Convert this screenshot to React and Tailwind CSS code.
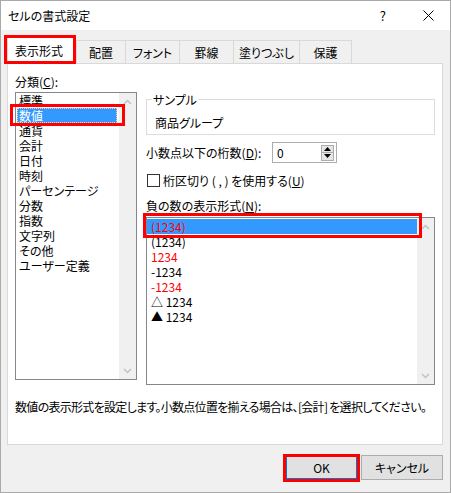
import React from "react";

const categories = [
  "標準",
  "数値",
  "通貨",
  "会計",
  "日付",
  "時刻",
  "パーセンテージ",
  "分数",
  "指数",
  "文字列",
  "その他",
  "ユーザー定義",
];

const negatives = [
  { text: "(1234)", red: true, selected: true },
  { text: "(1234)" },
  { text: "1234", red: true },
  { text: "-1234" },
  { text: "-1234", red: true },
  { text: "△ 1234" },
  { text: "▲ 1234" },
];

const tabs = [
  { label: "配置", w: "w-[49px]" },
  { label: "フォント", w: "w-[54px]" },
  { label: "罫線", w: "w-[54px]" },
  { label: "塗りつぶし", w: "w-[66px]" },
  { label: "保護", w: "w-[53px] border-r" },
];

function Chevron({ up }) {
  return (
    <svg width="9" height="6" viewBox="0 0 9 6">
      <path
        d={up ? "M1 5 L4.5 1.5 L8 5" : "M1 1 L4.5 4.5 L8 1"}
        fill="none"
        stroke="#c2c2c2"
        strokeWidth="1.5"
      />
    </svg>
  );
}

// Windows style vertical scrollbar (track only, no thumb)
function ScrollBar() {
  return (
    <div className="w-[17px] shrink-0 bg-[#f0f0f0] flex flex-col justify-between">
      <div className="h-[17px] flex items-center justify-center">
        <Chevron up />
      </div>
      <div className="h-[17px] flex items-center justify-center">
        <Chevron />
      </div>
    </div>
  );
}

function RedBox({ className }) {
  return (
    <span
      className={`absolute z-20 border-[3px] border-[#ff0000] pointer-events-none ${className}`}
    />
  );
}

export default function App() {
  return (
    <div className="w-[451px] h-[493px] bg-[#f0f0f0] border border-[#aaaaaa] flex flex-col text-[12px] text-black font-['Noto_Sans_CJK_JP',sans-serif] [font-feature-settings:'palt'] leading-[15px]">
      {/* Title bar */}
      <div className="h-[29px] shrink-0 bg-white flex items-center pl-[7px]">
        <span className="flex-1">セルの書式設定</span>
        <span className="text-[13px]">?</span>
        <svg className="ml-[37px] mr-[16px]" width="11" height="11" viewBox="0 0 11 11">
          <path d="M0.5 0.5 L10.5 10.5 M10.5 0.5 L0.5 10.5" stroke="#000" strokeWidth="1" />
        </svg>
      </div>

      {/* Tabs */}
      <div className="h-[33px] shrink-0 flex items-end pl-[6px]">
        <div className="relative z-10 w-[69px] h-[28px] -mb-[1px] bg-white border-x border-t border-[#d9d9d9] pl-[7px] pt-[6px]">
          表示形式
          <RedBox className="-left-[4px] -right-[1px] -top-[2px] bottom-[0px]" />
        </div>
        {tabs.map((t) => (
          <div
            key={t.label}
            className={`${t.w} h-[23px] border-l border-t border-[#d9d9d9] flex items-center justify-center`}
          >
            {t.label}
          </div>
        ))}
      </div>

      {/* Panel */}
      <div className="ml-[6px] w-[436px] h-[382px] shrink-0 bg-white border border-[#d9d9d9] flex flex-col px-[7px] pt-[10px]">
        <div className="flex gap-[9px]">
          {/* Category column */}
          <div className="w-[122px] flex flex-col">
            <div className="h-[15px]">
              分類(<span className="underline">C</span>):
            </div>
            <div className="mt-[3px] h-[288px] border border-[#828790] flex">
              <div className="flex-1 flex flex-col pl-[1px]">
                {categories.map((c, i) =>
                  i === 1 ? (
                    <div
                      key={c}
                      className="relative h-[15px] w-[100px] bg-[#3399ff] text-white pl-[1px] border border-dotted border-[#ffd49a] flex items-center"
                    >
                      {c}
                      <RedBox className="-left-[8px] -right-[9px] -top-[5px] -bottom-[4px]" />
                    </div>
                  ) : (
                    <div key={c} className="h-[15px] pl-[2px] whitespace-nowrap">
                      {c}
                    </div>
                  )
                )}
              </div>
              <ScrollBar />
            </div>
          </div>

          {/* Right column */}
          <div className="w-[289px] flex flex-col">
            <fieldset className="mt-[18px] border border-[#dcdcdc] pl-[5px] pb-[4px]">
              <legend className="px-[1px] h-[15px]">サンプル</legend>
              <div className="pt-[8px] pl-[3px]">商品グループ</div>
            </fieldset>

            <div className="mt-[7px] h-[21px] flex items-center">
              <div className="w-[126px]">
                小数点以下の桁数(<span className="underline">D</span>):
              </div>
              <div className="w-[65px] h-[21px] border border-[#abadb3] flex items-center justify-between pl-[4px] pr-[2px]">
                <span>0</span>
                <div className="flex flex-col w-[13px]">
                  <div className="h-[8px] bg-[#e5e5e5] border border-[#acacac] flex items-center justify-center">
                    <svg width="7" height="4" viewBox="0 0 7 4">
                      <path d="M0 4 L3.5 0 L7 4 Z" fill="#000" />
                    </svg>
                  </div>
                  <div className="h-[8px] bg-[#e5e5e5] border border-t-0 border-[#acacac] flex items-center justify-center">
                    <svg width="7" height="4" viewBox="0 0 7 4">
                      <path d="M0 0 L3.5 4 L7 0 Z" fill="#000" />
                    </svg>
                  </div>
                </div>
              </div>
            </div>

            <div className="mt-[10px] h-[15px] flex items-center">
              <div className="ml-[1px] w-[13px] h-[13px] border border-[#333333] bg-white" />
              <span className="ml-[3px] whitespace-nowrap">
                桁区切り ( , ) を使用する(<span className="underline">U</span>)
              </span>
            </div>

            <div className="mt-[10px] h-[15px]">
              負の数の表示形式(<span className="underline">N</span>):
            </div>
            <div className="mt-[4px] h-[168px] border border-[#828790] flex">
              <div className="flex-1 flex flex-col pt-[1px]">
                {negatives.map((n, i) => (
                  <div
                    key={i}
                    className={`relative h-[15px] pl-[4px] whitespace-nowrap ${
                      n.selected ? "bg-[#3399ff]" : ""
                    } ${n.red ? "text-[#ff0000]" : ""}`}
                  >
                    {n.text}
                    {n.selected && (
                      <RedBox className="-left-[4px] -right-[5px] -top-[6px] -bottom-[4px]" />
                    )}
                  </div>
                ))}
              </div>
              <ScrollBar />
            </div>
          </div>
        </div>

        <div className="mt-[14px] h-[15px] whitespace-nowrap tracking-[-0.7px]">
          数値の表示形式を設定します。小数点位置を揃える場合は、[会計] を選択してください。
        </div>
      </div>

      {/* Buttons */}
      <div className="mt-[9px] h-[26px] flex items-end justify-end gap-[3px] pr-[7px]">
        <button className="relative w-[73px] h-[26px] bg-[#e1e1e1] border-2 border-[#0078d7]">
          OK
          <RedBox className="-left-[4px] -right-[4px] -top-[2px] -bottom-[4px]" />
        </button>
        <button className="w-[82px] h-[25px] bg-[#e1e1e1] border border-[#adadad]">
          キャンセル
        </button>
      </div>
    </div>
  );
}
